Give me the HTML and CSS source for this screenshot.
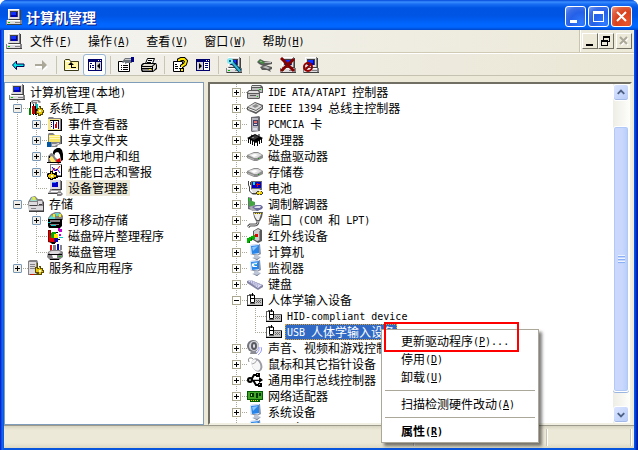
FILE: index.html
```html
<!DOCTYPE html>
<html lang="zh-CN">

<head>
    <meta charset="UTF-8">
    <meta name="viewport" content="width=device-width, initial-scale=1.0">
    <title>计算机管理</title>
    <link rel="stylesheet" href="styles.css">
</head>

<body>
    <svg class="sprite" aria-hidden="true">
        <symbol id="pc" viewBox="0 0 16 16">
            <path fill="#848284" d="M2 0h12v11H2zM0 11h16v5H0z" />
            <path fill="#dedbde" d="M2 0h11v10H2zM1 11h13v4H1z" />
            <path fill="#fff" d="M2 0h11v1H2zM2 1h1v8H2zM1 11h13v1H1z" />
            <path fill="#424142" d="M4 2h8v6H4zM14 1h1v10h-1zM3 10h11v1H3zM1 15h15v1H1z" />
            <path fill="#0000b5" d="M5 3h6v5H5z" />
            <path fill="#1030ff" d="M5 3h5v3H5z" />
            <path fill="#848284" d="M9 13h5v1H9z" />
            <path fill="#00c600" d="M2 13h2v1H2z" />
        </symbol>
        <symbol id="tools" viewBox="0 0 16 16">
            <path fill="#848284" d="M3 1l2-1h6l2 2-1 1-3-1v4H7V3L4 4z" />
            <path fill="#dedbde" d="M5 1h5v1H5z" />
            <path fill="#000" d="M2 2h1v6H2zM7 6h2v9H7zM5 4h1v11H5z" />
            <path fill="#c60000" d="M4 6h3v8H4z" />
            <path fill="#008200" d="M1 8h2v7H1z" />
            <path fill="#00c6c6" d="M8 4h2v5H8z" />
            <path fill="#5a4a00" d="M9 8h2V6h2v2h2v2h1v3h-1v2h-2v1h-3v-2H8v-3h1z" />
            <path fill="#e7c600" d="M10 9h1V7h1v2h2v1h1v2h-1v2h-2v1h-1v-2H9v-2h1z" />
            <path fill="#fff" d="M11 10h2v2h-2z" />
        </symbol>
        <symbol id="events" viewBox="0 0 16 16">
            <path fill="#848284" d="M1 2l1-1h4l1 1h7v13H1z" />
            <path fill="#f7e78c" d="M1 3h12v11H1z" />
            <path fill="#000" d="M14 3h1v12H1v-1h13zM3 4h9v1H3z" />
            <path fill="#fff" d="M4 5h8v8H4z" />
            <path fill="#00009c" d="M4 6h1v1H4zM4 8h1v1H4zM4 10h1v1H4zM6 5h1v8H6zM11 5h1v8h-1z" />
            <path fill="#e70000" d="M8 8h2v4H8zM9 6h1v2H9z" />
        </symbol>
        <symbol id="share" viewBox="0 0 16 16">
            <path fill="#848284" d="M1 2l1-1h4l2 2h6v8H1z" />
            <path fill="#f7e76b" d="M2 3h11v7H2z" />
            <path fill="#fff7bd" d="M2 4h11v1H2zM3 6h10v1H3z" />
            <path fill="#424142" d="M14 4h1v8H6v-1h8z" />
            <path fill="#0055a5" d="M0 10h4v5H0z" />
            <path fill="#848284" d="M4 11h3l2-1h4l1 2-3 1-1 2H4z" />
            <path fill="#dedbde" d="M5 12h4l2-1h1v1l-3 1-1 1H5z" />
        </symbol>
        <symbol id="users" viewBox="0 0 16 16">
            <path fill="#000" d="M7 2l3-2h3l2 2 1 4v6l-2 1-1-6-2-3-2 3H6V4z" />
            <path fill="#fff" d="M8 5l2-1 2 1 1 4-2 3H9L7 9z" />
            <path fill="#848284" d="M1 8l3-3 3 1 1 3 2 2v3l-3 1-6-1z" />
            <path fill="#ffe76b" d="M2 10l3-2 4 6H4z" />
            <path fill="#e70000" d="M9 12l4-2 1 4-3 2z" />
            <path fill="#000" d="M0 14h14v1H0zM2 8h1v2H2z" />
        </symbol>
        <symbol id="perf" viewBox="0 0 16 16">
            <path fill="#848284" d="M3 0h12v12H3z" />
            <path fill="#fff" d="M4 1h10v10H4z" />
            <path fill="#000" d="M14 1h1v12H7v-1h7z" />
            <path fill="none" stroke="#e70000" d="M5 8l2-4 2 3 4-5" />
            <path fill="none" stroke="#0000e7" d="M5 3l3 4 2-2 3 4" />
            <path fill="#000" d="M1 9h2V7h3v2h2V8h2v3l1 1v2H9v1H6v1H3v-1H1v-2H0v-3z" />
            <path fill="#e7c600" d="M2 10h2V8h1v2h2v1h2v2H7v1H5v1H4v-1H2v-1H1v-2h1z" />
            <path fill="#fff" d="M4 11h2v2H4z" />
        </symbol>
        <symbol id="devmgr" viewBox="0 0 16 16">
            <path fill="#848284" d="M3 0h11v10H3z" />
            <path fill="#dedbde" d="M3 0h10v9H3z" />
            <path fill="#0000c6" d="M5 2h6v5H5z" />
            <path fill="#4a8aff" d="M5 2h4v1H5z" />
            <path fill="#424142" d="M14 1h1v9H5V9h9zM1 13h10v1H1z" />
            <path fill="#adaaad" d="M3 10h11v2l-3 1H1z" />
            <path fill="#fff" d="M4 11h7v1H4z" />
            <path fill="#848284" d="M10 12h4l2 2-2 2h-4z" />
            <path fill="#dedbde" d="M11 13h3v1h-3z" />
        </symbol>
        <symbol id="storage" viewBox="0 0 16 16">
            <path fill="#848284" d="M0 6l3-5 4-1 3 3h4l2 3v8l-1 1H1z" />
            <path fill="#9cdece" d="M2 5l2-4h3l2 4z" />
            <path fill="#ffe700" d="M5 1h2v3H5z" />
            <path fill="#dedbde" d="M1 6h8v3H1zM1 10h14v4H1zM10 5h4v4h-4z" />
            <path fill="#424142" d="M15 6h1v10H1v-1h14zM2 9h7v1H2zM11 8h3v1h-3z" />
            <path fill="#848284" d="M3 12h5v1H3z" />
        </symbol>
        <symbol id="removable" viewBox="0 0 16 16">
            <path fill="#848284" d="M1 6l3-4 4-2h5l3 4v4H1z" />
            <path fill="#5ad6ce" d="M2 6l3-3 3 2v2H2zM8 1h4l1 3H9z" />
            <path fill="#ffe700" d="M6 2h2v3H6zM12 2h2v3h-2z" />
            <path fill="#000" d="M1 7h14v7l-2 2H2l-1-2z" />
            <path fill="#848284" d="M3 8h10v2H3zM3 12h9v1H3z" />
            <path fill="#00c6c6" d="M1 10h3v1H1zM4 13h5v1H4z" />
        </symbol>
        <symbol id="defrag" viewBox="0 0 16 16">
            <path fill="#840000" d="M1 2h3v3l5 2v8H5l-4-1z" />
            <path fill="#e70000" d="M2 3h1v4l4 3v4H5l-3-1z" />
            <path fill="#00a500" d="M5 4h4v2H7v4H4V6z" />
            <path fill="#ffe700" d="M7 6h4v4H7z" />
            <path fill="#0000c6" d="M8 10h3v4H8z" />
            <path fill="#c600c6" d="M11 0h2v1h2v3h-3V3h-1zM12 6h2v2h-2z" />
            <path fill="#00c6c6" d="M12 9h4v1h-4z" />
            <path fill="#000" d="M9 4h2v1H9zM11 11h2v1h-2zM3 14h5v2H5z" />
        </symbol>
        <symbol id="disk" viewBox="0 0 16 16">
            <path fill="#e70000" d="M3 1h2v6H3z" />
            <path fill="#0000c6" d="M10 0h2v6h-2z" />
            <path fill="#848284" d="M6 1h3v5H6zM13 1h2v5h-2zM1 8l3-2h9l3 2v5l-4 3H3l-3-3z" />
            <path fill="#dedbde" d="M2 8l3-1h7l2 1-3 2H3z" />
            <path fill="#000" d="M1 10h14v1H1zM3 15h9v1H3z" />
            <path fill="#fff" d="M5 11h5v3H6z" />
            <path fill="#00c600" d="M12 12h2v1h-2z" />
        </symbol>
        <symbol id="services" viewBox="0 0 16 16">
            <path fill="#848284" d="M0 1l2-1h7l1 2v13H0z" />
            <path fill="#dedbde" d="M1 2h7v12H1z" />
            <path fill="#848284" d="M2 4h5v1H2zM2 6h5v1H2zM2 8h5v1H2z" />
            <path fill="#5a4a00" d="M9 3h1v12H2v-1h7zM7 7h2v1h2V6h2v2h2v2h1v3h-2v2h-4v-2H7z" />
            <path fill="#e7c600" d="M8 8h1v1h2V7h1v2h2v2h1v1h-2v2h-2v-2H8z" />
            <path fill="#fff" d="M11 10h2v2h-2z" />
            <path fill="#e70000" d="M3 14h3v1H3z" />
        </symbol>

        <!-- device classes -->
        <symbol id="ide" viewBox="0 0 16 16">
            <path fill="#5a5a5a" d="M5 1h9l2 2v6H4V3zM0 8l2-2h9l2 2v6l-1 1H1l-1-1z" />
            <path fill="#dedede" d="M5 2h8l1 1H5zM2 7h9l1 2H1z" />
            <path fill="#bdbdbd" d="M5 4h10v4h-2l-1-2H5zM1 10h11v4H1z" />
            <path fill="#5a5a5a" d="M3 11h6v1H3z" />
            <path fill="#00c600" d="M12 5h2v1h-2zM10 12h1v1h-1z" />
        </symbol>
        <symbol id="ieee" viewBox="0 0 16 16">
            <path fill="#5a5a5a" d="M0 7l8-5 8 3v4l-7 5-9-4z" />
            <path fill="#dedede" d="M1 7l7-4 7 3-6 4z" />
            <path fill="#8c8c8c" d="M5 6l4-2 3 2-4 2zM2 10l2 1v1l-2-1z" />
            <path fill="#fff" d="M1 8l8 3 6-4v1l-6 4-8-3z" />
        </symbol>
        <symbol id="pcmcia" viewBox="0 0 16 16">
            <path fill="#6b6b73" d="M4 1l8-1 1 1v14l-8 1-1-1z" />
            <path fill="#b5b5bd" d="M5 2h6v13H5z" />
            <path fill="#42426b" d="M6 4h5v6H6z" />
            <path fill="#e76b6b" d="M7 5h3v2H7z" />
            <path fill="#dedeef" d="M7 8h3v1H7zM6 12h4v2H6z" />
        </symbol>
        <symbol id="cpu" viewBox="0 0 16 16">
            <path fill="#000" d="M0 6l8-4 8 4-7 5z" />
            <path fill="#393939" d="M3 6l5-3 4 2-5 3z" />
            <path stroke="#000" fill="none" d="M1.500 6v5M3.500 7v5M5.500 8v5M7.500 9v5M10.500 9v5M12.500 8v4M14.500 6v5M4 3l2 1M12 2v2" />
            <path fill="#8c8c8c" d="M5 5h2v1H5z" />
        </symbol>
        <symbol id="drive" viewBox="0 0 16 16">
            <path fill="#8c8c8c" d="M0 7l7-3h4l5 3v3l-6 3H7L0 10z" />
            <path fill="#dedede" d="M1 7l6-2h4l4 2-5 3H7z" />
            <path fill="#fff" d="M4 7l4-1 3 1-4 2z" />
            <path fill="#b5b5b5" d="M1 9l6 2v1l-6-2z" />
            <path fill="#00a500" d="M11 10h1v1h-1z" />
        </symbol>
        <symbol id="battery" viewBox="0 0 16 16">
            <path fill="#6b6b73" d="M4 1h11v9H4z" />
            <path fill="none" stroke="#424242" d="M1.500 1v4l1 2v4l3 3h4M3.500 2v3" />
            <path fill="#0000c6" d="M5 2h9v6H5z" />
            <path fill="#00e7e7" d="M6 2h2v3H6z" />
            <path fill="#e70000" d="M10 3h1v1h2v1h-2v2h-1V5H9V4h1z" />
            <path fill="#dedede" d="M4 9h9l-2 4H6z" />
            <path fill="#424242" d="M5 13h6v1H5zM10 11h5v1h1v2h-1v1h-5v-1H9v-2h1z" />
            <path fill="#f7d600" d="M10 12h2v-1h2v1h1v2h-2v1h-1v-1h-2z" />
            <path fill="#fff" d="M12 12h1v1h-1z" />
        </symbol>
        <symbol id="modem" viewBox="0 0 16 16">
            <path fill="#6b6b73" d="M1 1l4 1v12l-4-1z" />
            <path fill="#42a542" d="M2 4l6 2v5l-6-1z" />
            <path fill="#adadb5" d="M2 11l6-2 7 3-4 3H5z" />
            <path fill="#6b6b9c" d="M5 11l4-2h5l2 2-1 2-5 2z" />
            <path fill="#dedeef" d="M7 11l3-1h4l-1 2H8z" />
            <path fill="#00e700" d="M2 2h1v3H2z" />
        </symbol>
        <symbol id="port" viewBox="0 0 16 16">
            <path fill="#5a5a5a" d="M6 0h10l-1 5-2 4H9L7 5z" />
            <path fill="#efefef" d="M7 2h7l-1 3-1 3h-2L8 5z" />
            <path fill="#ffe700" d="M7 1h1v1H7zM9 1h1v1H9zM11 1h1v1h-1zM13 1h1v1h-1z" />
            <path fill="none" stroke="#5a5a5a" stroke-width="3" d="M11 9c0 4-2 4-5 4H3L1 15" />
            <path fill="none" stroke="#dedede" d="M11 9c0 4-2 4-5 4H3L1 15" />
        </symbol>
        <symbol id="infrared" viewBox="0 0 16 16">
            <path fill="#5a5a5a" d="M6 3l5-3 4 2v11l-4 2-5-3z" />
            <path fill="#cecece" d="M7 3l4-2 2 1v10l-3 1-3-2z" />
            <path fill="#8c8c8c" d="M12 3h1v9h-1z" />
            <path fill="#e70000" d="M8 6h3v3H8z" />
            <path fill="#00b500" d="M0 10h2V9h2V8h2V7h2v4H6v1H5v1H3v2H0z" />
            <path fill="#005a00" d="M2 13h1v2H2zM4 10h1v2H4z" />
        </symbol>
        <symbol id="monitor" viewBox="0 0 16 16">
            <path fill="#8c94a5" d="M3 1l10-1 1 10-4 2-7-2z" />
            <path fill="#d6e7ff" d="M3 1l9-1v10l-9 0z" />
            <path fill="#2984e7" d="M4 2l8-1v8l-7 1z" />
            <path fill="#8cc6ff" d="M5 3l6-1-5 5z" />
            <path fill="#bdc6d6" d="M7 11l4-1v2l3 1-4 3-5-2 2-1z" />
            <path fill="#6b738c" d="M6 14l4 1 4-2-4 3z" />
        </symbol>
        <symbol id="display" viewBox="0 0 16 16">
            <use href="#monitor" />
            <path fill="#fff" d="M5 4l5-1v1L6 6h4v1H6L5 6z" />
            <path fill="#42c6c6" d="M7 4h2v1H7z" />
        </symbol>
        <symbol id="keyboard" viewBox="0 0 16 16">
            <path fill="#8484a5" d="M0 5l3-1 13 5v2l-5 3L0 7z" />
            <path fill="#dedef7" d="M1 5l2-1 12 5-4 3z" />
            <path stroke="#8c8cb5" fill="none" stroke-dasharray="1 1" d="M3 5.500l9 4M3 6.500l8 4M5 5l9 4" />
        </symbol>
        <symbol id="hid" viewBox="0 0 16 16">
            <path fill="#5a5a5a" d="M0 3h2V2h5v4h9v8H0z" />
            <path fill="#fff" d="M1 4h2v8H1zM4 4h3v6H4z" />
            <path fill="#000" d="M3 3h1v7H3zM7 3h1v7H7zM4 10h3v1H4zM4 6h3v1H4zM5 1h1v3H5zM0 13h16v1H0zM15 7h1v7h-1z" />
            <path fill="#c6c6c6" d="M8 7h7v5H8z" />
            <path fill="#6b6b6b" d="M9 8h1v1H9zM11 8h1v1h-1zM13 8h1v1h-1zM10 9h1v1h-1zM12 9h1v1h-1zM9 10h1v1H9zM11 10h1v1h-1zM13 10h1v1h-1z" />
            <path fill="#bdbdbd" d="M1 12h14v1H1z" />
        </symbol>
        <symbol id="sound" viewBox="0 0 16 16">
            <ellipse cx="6" cy="6" rx="6" ry="6" fill="#73737b" />
            <ellipse cx="7" cy="6" rx="5" ry="5" fill="#d6d6de" />
            <ellipse cx="7" cy="6" rx="3" ry="4" fill="#5a5a63" />
            <ellipse cx="7" cy="6" rx="1" ry="2" fill="#e7e7ef" />
            <path fill="#8c8c94" d="M4 11h5l1 3H3z" />
            <path fill="none" stroke="#9c9cff" d="M12 7q1 3-2 6M14 7q2 4-3 8" />
        </symbol>
        <symbol id="mouse" viewBox="0 0 16 16">
            <path fill="none" stroke="#8c8c8c" d="M2 6Q0 1 5 2l2 2" />
            <ellipse cx="10" cy="9" rx="5" ry="7" fill="#9c9ca5" transform="rotate(-25 10 9)" />
            <ellipse cx="9" cy="9" rx="4" ry="6" fill="#f7f7f7" transform="rotate(-25 9 9)" />
            <path fill="none" stroke="#a5a5a5" d="M5 8q3 0 5-4" />
        </symbol>
        <symbol id="usb" viewBox="0 0 16 16">
            <path fill="none" stroke="#000" stroke-width="2" d="M2 8h12M4 8l3-5h3M6 8l3 5h3" />
            <circle cx="3" cy="8" r="3" fill="#000" />
            <path fill="#000" d="M12 5l4 3-4 3zM9 1h4v4H9zM11 11h4v4h-4z" />
            <circle cx="3" cy="8" r="1" fill="#bdbdbd" />
            <path fill="#bdbdbd" d="M10 2h1v1h-1zM12 12h1v1h-1zM6 7h6v1H6z" />
        </symbol>
        <symbol id="nic" viewBox="0 0 16 16">
            <path fill="#005a00" d="M0 3h16v9h-3v2H3v-2H0z" />
            <path fill="#42a529" d="M1 4h14v7H1z" />
            <path fill="#003900" d="M3 5h4v4H3zM9 5h2v5H9zM12 5h2v3h-2z" />
            <path fill="#a5de63" d="M4 6h1v2H4z" />
            <path fill="#ffe700" d="M4 12h1v1H4zM6 12h1v1H6zM8 12h1v1H8zM10 12h1v1h-1z" />
        </symbol>

        <!-- toolbar -->
        <symbol id="back" viewBox="0 0 16 16">
            <path fill="#00e7e7" stroke="#000050" d="M2.500 8l4-4v3h7.500v2.500h-7.500v3z" />
        </symbol>
        <symbol id="forward" viewBox="0 0 16 16">
            <path fill="#fff" d="M3 8h7V5l5 5-5 4v-3H3z" />
            <path fill="#aca899" d="M2 7h7V3l5 5-5 5V9H2z" />
        </symbol>
        <symbol id="up" viewBox="0 0 16 16">
            <path fill="#fff7a5" stroke="#393918" d="M.5 13.500v-10l1-1h4l1 2h8v9z" />
            <path fill="#fff" d="M2 4h4v1H2zM2 12h12v1H2z" />
            <path fill="#000" d="M4 8l3-3 3 3H8v2h4v1H7V8z" />
        </symbol>
        <symbol id="tree-left" viewBox="0 0 16 16">
            <path fill="#00006b" d="M1 2h14v12H1z" />
            <path fill="#fff" d="M2 5h6v8H2z" />
            <path fill="#00006b" d="M3 6h2v1H3zM5 8h2v1H5zM5 10h2v1H5zM3 8h1v3H3z" />
            <path fill="#d6d3ce" d="M9 5h5v8H9z" />
            <path fill="#000" d="M13 6v6l-3-3z" />
            <path fill="#fff" d="M11 3h1v1h-1zM13 3h1v1h-1z" />
        </symbol>
        <symbol id="tree-right" viewBox="0 0 16 16">
            <path fill="#00006b" d="M1 2h14v12H1z" />
            <path fill="#d6d3ce" d="M2 5h6v8H2z" />
            <path fill="#fff" d="M9 5h5v8H9zM11 3h1v1h-1zM13 3h1v1h-1z" />
            <path fill="#000" d="M4 6v6l3-3z" />
            <path fill="#00006b" d="M10 6h3v1h-3zM10 8h3v1h-3zM10 10h3v1h-3z" />
        </symbol>
        <symbol id="props" viewBox="0 0 16 16">
            <path fill="#fff" stroke="#000" d="M.5 4.500h11v10H.5z" />
            <path fill="#000" d="M3 8h1v1H3zM5 8h5v1H5zM3 10h1v1H3zM5 10h5v1H5zM3 12h1v1H3zM5 12h5v1H5z" />
            <path fill="#6b737b" d="M4 5l3-4h7v5H9L7 7V5L5 6z" />
            <path fill="#c6c6c6" d="M7 2h6v1H7z" />
            <path fill="#000084" d="M13 0h3v5h-3z" />
        </symbol>
        <symbol id="print" viewBox="0 0 16 16">
            <path fill="#fff" stroke="#000" d="M4.500 6.500l2-5h7l-2 5z" />
            <path fill="#000" d="M7 3h4v1H7zM6 5h4v1H6zM2 6h13l1 2v4l-4 3H1l-1-2V8z" />
            <path fill="#dedbce" d="M3 7h10l-2 2H1zM1 10h10v1H1zM12 9l3-2v4l-3 3z" />
            <path fill="#848284" d="M1 12h10v2H2z" />
            <path fill="#ffe700" d="M8 12h2v1H8z" />
        </symbol>
        <symbol id="help" viewBox="0 0 16 16">
            <path fill="#fff" stroke="#000" d="M1.500 4.500h9v10h-9z" />
            <path fill="#000" d="M3 7h2v1H3zM3 9h3v1H3zM3 11h3v1H3zM7 11h2v1H7z" />
            <path fill="none" stroke="#000" stroke-width="4" d="M7 4V3l2-1h3l2 2-1 3-3 2v1" />
            <path fill="none" stroke="#ffe700" stroke-width="2" d="M7 4V3l2-1h3l2 2-1 3-3 2v1" />
            <path fill="#000" d="M8 11h4v4H8z" />
            <path fill="#ffe700" d="M9 12h2v2H9z" />
        </symbol>
        <symbol id="scan" viewBox="0 0 16 16">
            <use href="#pc" />
            <path fill="none" stroke="#003952" stroke-width="4" d="M5 4l9 10" />
            <path fill="none" stroke="#31b5d6" stroke-width="2" d="M5 4l9 10" />
            <circle cx="4" cy="4" r="3" fill="#84e7ef" />
            <path fill="#006b8c" d="M3 3h2v2H3z" />
        </symbol>
        <symbol id="update" viewBox="0 0 16 16">
            <path fill="#5a5a5a" d="M0 5l3-3 4 2 8 1v2L6 9 2 7zM3 10l5-2 7 2v2l-2 1 1 2-4-2H5z" />
            <path fill="#428c42" d="M1 4l3-1 4 3-3 1z" />
            <path fill="#bdbdbd" d="M7 5h7v1H8zM5 10l4-1 4 2-2 1z" />
            <path fill="#84b584" d="M3 4h2v1H3z" />
        </symbol>
        <symbol id="remove" viewBox="0 0 16 16">
            <use href="#pc" />
            <path fill="none" stroke="#840000" stroke-width="3" d="M1 1l13 13M14 2L1 14" />
        </symbol>
        <symbol id="disable" viewBox="0 0 16 16">
            <use href="#pc" />
            <circle cx="5" cy="10" r="4" fill="none" stroke="#940000" stroke-width="2" />
            <path stroke="#940000" stroke-width="2" d="M2 13l6-6" />
        </symbol>
    </svg>

    <div class="window">
        <header class="titlebar">
            <svg class="icon"><use href="#pc" /></svg>
            <h1 class="title">计算机管理</h1>
            <div class="captions">
                <button class="caption" aria-label="最小化"><svg viewBox="0 0 19 19"><path fill="#fff" d="M4 13h7v3H4z" /></svg></button>
                <button class="caption" aria-label="最大化"><svg viewBox="0 0 19 19"><path fill="#fff" d="M4 4h11v11H4zM5 7v7h9V7z" fill-rule="evenodd" /></svg></button>
                <button class="caption close" aria-label="关闭"><svg viewBox="0 0 19 19"><path stroke="#fff" stroke-width="2" d="M5 5l9 9M14 5l-9 9" /></svg></button>
            </div>
        </header>

        <nav class="menubar">
            <svg class="icon"><use href="#pc" /></svg>
            <div class="menus">
                <button class="menu">文件<span class="en">(<u>F</u>)</span></button>
                <button class="menu">操作<span class="en">(<u>A</u>)</span></button>
                <button class="menu">查看<span class="en">(<u>V</u>)</span></button>
                <button class="menu">窗口<span class="en">(<u>W</u>)</span></button>
                <button class="menu">帮助<span class="en">(<u>H</u>)</span></button>
            </div>
            <div class="mdi">
                <button class="mdi-btn" aria-label="最小化子窗口"><svg viewBox="0 0 12 12"><path d="M2 9h7v2H2z" /></svg></button>
                <button class="mdi-btn" aria-label="还原子窗口"><svg viewBox="0 0 12 12"><path fill-rule="evenodd" d="M3 1h7v6H8v4H1V5h2zM4 3v2h4v1h1V3zM2 7v3h5V7z" /></svg></button>
                <button class="mdi-btn mdi-close" aria-label="关闭子窗口" disabled><svg viewBox="0 0 12 12"><path stroke="#fff" stroke-width="2" d="M3 3l7 7M10 3l-7 7" /><path stroke="#aca899" stroke-width="2" d="M2 2l7 7M9 2L2 9" /></svg></button>
            </div>
        </nav>

        <div class="toolbar">
            <button class="tool" aria-label="后退"><svg class="icon"><use href="#back" /></svg></button>
            <button class="tool" aria-label="前进" disabled><svg class="icon"><use href="#forward" /></svg></button>
            <span class="sep"></span>
            <button class="tool" aria-label="向上"><svg class="icon"><use href="#up" /></svg></button>
            <button class="tool active" aria-label="控制台树"><svg class="icon"><use href="#tree-left" /></svg></button>
            <span class="sep"></span>
            <button class="tool" aria-label="属性"><svg class="icon"><use href="#props" /></svg></button>
            <button class="tool" aria-label="打印"><svg class="icon"><use href="#print" /></svg></button>
            <span class="sep"></span>
            <button class="tool" aria-label="帮助"><svg class="icon"><use href="#help" /></svg></button>
            <button class="tool" aria-label="操作窗格"><svg class="icon"><use href="#tree-right" /></svg></button>
            <span class="sep"></span>
            <button class="tool" aria-label="扫描检测硬件改动"><svg class="icon"><use href="#scan" /></svg></button>
            <span class="sep"></span>
            <button class="tool" aria-label="更新驱动程序"><svg class="icon"><use href="#update" /></svg></button>
            <button class="tool" aria-label="卸载"><svg class="icon"><use href="#remove" /></svg></button>
            <button class="tool" aria-label="停用"><svg class="icon"><use href="#disable" /></svg></button>
        </div>

        <main class="panes">
            <section class="pane console">
                <div class="root"><svg class="icon"><use href="#pc" /></svg><span class="label">计算机管理<span class="en">(</span>本地<span class="en">)</span></span></div>
                <ul class="tree">
                    <li>
                        <div class="row"><button class="exp open" aria-label="折叠"></button><svg class="icon"><use href="#tools" /></svg><span class="label">系统工具</span></div>
                        <ul class="tree">
                            <li><div class="row"><button class="exp" aria-label="展开"></button><svg class="icon"><use href="#events" /></svg><span class="label">事件查看器</span></div></li>
                            <li><div class="row"><button class="exp" aria-label="展开"></button><svg class="icon"><use href="#share" /></svg><span class="label">共享文件夹</span></div></li>
                            <li><div class="row"><button class="exp" aria-label="展开"></button><svg class="icon"><use href="#users" /></svg><span class="label">本地用户和组</span></div></li>
                            <li><div class="row"><button class="exp" aria-label="展开"></button><svg class="icon"><use href="#perf" /></svg><span class="label">性能日志和警报</span></div></li>
                            <li><div class="row leaf"><svg class="icon"><use href="#devmgr" /></svg><span class="label current">设备管理器</span></div></li>
                        </ul>
                    </li>
                    <li>
                        <div class="row"><button class="exp open" aria-label="折叠"></button><svg class="icon"><use href="#storage" /></svg><span class="label">存储</span></div>
                        <ul class="tree">
                            <li><div class="row"><button class="exp" aria-label="展开"></button><svg class="icon"><use href="#removable" /></svg><span class="label">可移动存储</span></div></li>
                            <li><div class="row leaf"><svg class="icon"><use href="#defrag" /></svg><span class="label">磁盘碎片整理程序</span></div></li>
                            <li><div class="row leaf"><svg class="icon"><use href="#disk" /></svg><span class="label">磁盘管理</span></div></li>
                        </ul>
                    </li>
                    <li><div class="row"><button class="exp" aria-label="展开"></button><svg class="icon"><use href="#services" /></svg><span class="label">服务和应用程序</span></div></li>
                </ul>
            </section>

            <section class="pane devices">
                <ul class="tree">
                    <li><div class="row"><button class="exp" aria-label="展开"></button><svg class="icon"><use href="#ide" /></svg><span class="label"><span class="en">IDE ATA/ATAPI </span>控制器</span></div></li>
                    <li><div class="row"><button class="exp" aria-label="展开"></button><svg class="icon"><use href="#ieee" /></svg><span class="label"><span class="en">IEEE 1394 </span>总线主控制器</span></div></li>
                    <li><div class="row"><button class="exp" aria-label="展开"></button><svg class="icon"><use href="#pcmcia" /></svg><span class="label"><span class="en">PCMCIA </span>卡</span></div></li>
                    <li><div class="row"><button class="exp" aria-label="展开"></button><svg class="icon"><use href="#cpu" /></svg><span class="label">处理器</span></div></li>
                    <li><div class="row"><button class="exp" aria-label="展开"></button><svg class="icon"><use href="#drive" /></svg><span class="label">磁盘驱动器</span></div></li>
                    <li><div class="row"><button class="exp" aria-label="展开"></button><svg class="icon"><use href="#drive" /></svg><span class="label">存储卷</span></div></li>
                    <li><div class="row"><button class="exp" aria-label="展开"></button><svg class="icon"><use href="#battery" /></svg><span class="label">电池</span></div></li>
                    <li><div class="row"><button class="exp" aria-label="展开"></button><svg class="icon"><use href="#modem" /></svg><span class="label">调制解调器</span></div></li>
                    <li><div class="row"><button class="exp" aria-label="展开"></button><svg class="icon"><use href="#port" /></svg><span class="label">端口<span class="en"> (COM </span>和<span class="en"> LPT)</span></span></div></li>
                    <li><div class="row"><button class="exp" aria-label="展开"></button><svg class="icon"><use href="#infrared" /></svg><span class="label">红外线设备</span></div></li>
                    <li><div class="row"><button class="exp" aria-label="展开"></button><svg class="icon"><use href="#monitor" /></svg><span class="label">计算机</span></div></li>
                    <li><div class="row"><button class="exp" aria-label="展开"></button><svg class="icon"><use href="#display" /></svg><span class="label">监视器</span></div></li>
                    <li><div class="row"><button class="exp" aria-label="展开"></button><svg class="icon"><use href="#keyboard" /></svg><span class="label">键盘</span></div></li>
                    <li>
                        <div class="row"><button class="exp open" aria-label="折叠"></button><svg class="icon"><use href="#hid" /></svg><span class="label">人体学输入设备</span></div>
                        <ul class="tree">
                            <li><div class="row leaf"><svg class="icon"><use href="#hid" /></svg><span class="label"><span class="en">HID-compliant device</span></span></div></li>
                            <li><div class="row leaf"><svg class="icon"><use href="#hid" /></svg><span class="label selected"><span class="en">USB </span>人体学输入设备</span></div></li>
                        </ul>
                    </li>
                    <li><div class="row"><button class="exp" aria-label="展开"></button><svg class="icon"><use href="#sound" /></svg><span class="label">声音、视频和游戏控制器</span></div></li>
                    <li><div class="row"><button class="exp" aria-label="展开"></button><svg class="icon"><use href="#mouse" /></svg><span class="label">鼠标和其它指针设备</span></div></li>
                    <li><div class="row"><button class="exp" aria-label="展开"></button><svg class="icon"><use href="#usb" /></svg><span class="label">通用串行总线控制器</span></div></li>
                    <li><div class="row"><button class="exp" aria-label="展开"></button><svg class="icon"><use href="#nic" /></svg><span class="label">网络适配器</span></div></li>
                    <li><div class="row"><button class="exp" aria-label="展开"></button><svg class="icon"><use href="#monitor" /></svg><span class="label">系统设备</span></div></li>
                    <li><div class="row"><button class="exp" aria-label="展开"></button><svg class="icon"><use href="#monitor" /></svg><span class="label">显示卡</span></div></li>
                </ul>
                <div class="scrollbar">
                    <button class="arrow" aria-label="向上滚动"><svg viewBox="0 0 15 15"><path fill="none" stroke="#4d6185" stroke-width="2" d="M4 9l3.500-3.500L11 9" /></svg></button>
                    <div class="track"><div class="thumb"></div></div>
                    <button class="arrow" aria-label="向下滚动"><svg viewBox="0 0 15 15"><path fill="none" stroke="#4d6185" stroke-width="2" d="M4 6l3.500 3.500L11 6" /></svg></button>
                </div>
            </section>
        </main>

        <footer class="statusbar">
            <span class="status main"></span>
            <span class="status mid"></span>
            <span class="status end"></span>
        </footer>

        <div class="context-menu">
            <button class="item">更新驱动程序<span class="en">(<u>P</u>)...</span></button>
            <button class="item">停用<span class="en">(<u>D</u>)</span></button>
            <button class="item">卸载<span class="en">(<u>U</u>)</span></button>
            <hr>
            <button class="item">扫描检测硬件改动<span class="en">(<u>A</u>)</span></button>
            <hr>
            <button class="item default">属性<span class="en">(<u>R</u>)</span></button>
        </div>
        <div class="marker"></div>
    </div>
</body>

</html>
```

FILE: styles.css
```css
* {
    margin: 0;
    padding: 0;
    box-sizing: border-box;
}

body {
    font-family: "Noto Sans CJK SC", "Liberation Sans", sans-serif;
    font-size: 12px;
    line-height: 16px;
    color: #000;
    background: #fff;
}

button {
    font: inherit;
    color: inherit;
    background: none;
    border: none;
    white-space: pre;
}

ul {
    list-style: none;
}

.sprite {
    display: none;
}

.icon {
    flex: none;
    display: block;
    width: 16px;
    height: 16px;
}

.en {
    font-family: "DejaVu Sans Mono", "Liberation Mono", monospace;
    font-size: 10px;
    line-height: 12px;
    vertical-align: 1px;
}

/* window frame */
.window {
    position: relative;
    display: flex;
    flex-direction: column;
    height: 100vh;
    padding: 0 4px 2px;
    overflow: hidden;
    border-radius: 7px 7px 0 0;
    background: linear-gradient(90deg, #0019cf 0, #0831d9 1px, #166aee 2px, #0855dd 4px, #0855dd calc(100% - 4px), #0050f0 calc(100% - 3px), #0030c8 calc(100% - 2px), #00138c 100%);
}

.titlebar {
    display: flex;
    align-items: center;
    gap: 4px;
    flex: none;
    height: 30px;
    margin: 0 -4px;
    padding: 3px 6px 0;
    background: linear-gradient(#0347d8 0, #3a8fff 2px, #1a6ff5 4px, #0054e3 8px, #0055e5 16px, #0066ff 24px, #0066ff 27px, #0048cc 30px);
}

.title {
    flex: 1;
    font-size: 14px;
    font-weight: bold;
    color: #fff;
    text-shadow: 1px 1px 0 #0a1883;
}

.captions {
    display: flex;
    gap: 2px;
}

.caption {
    width: 21px;
    height: 21px;
    border: 1px solid #fff;
    border-radius: 3px;
    background: radial-gradient(circle at 80% 85%, #2f7bff 0, #2460e8 50%, #3d6fe8 75%, #7ba2f5 100%);
}

.caption svg,
.mdi-btn svg,
.arrow svg {
    display: block;
    width: 100%;
    height: 100%;
}

.close {
    background: radial-gradient(circle at 80% 85%, #e8552c 0, #d8401c 50%, #e06040 75%, #f0a088 100%);
}

/* menu bar */
.menubar {
    display: flex;
    align-items: center;
    flex: none;
    height: 23px;
    padding-left: 2px;
    background: linear-gradient(90deg, #f4f4f2, #ece9d8);
    border-bottom: 1px solid #d0cab4;
}

.menus {
    display: flex;
    flex: 1;
    gap: 16px;
    padding-left: 8px;
}

.mdi {
    display: flex;
    align-items: center;
    height: 100%;
    padding: 0 2px;
    border-left: 1px solid #c8c4b0;
    box-shadow: inset 1px 0 #fff;
}

.mdi-btn {
    width: 16px;
    height: 16px;
    padding: 1px;
    background: #ece9d8;
    border: 1px solid;
    border-color: #fff #716f64 #716f64 #fff;
}

.mdi-close {
    margin-left: 2px;
}

/* tool bar */
.toolbar {
    display: flex;
    align-items: center;
    flex: none;
    height: 23px;
    padding-left: 2px;
    background: linear-gradient(90deg, #f2f1ed, #ebe7d6);
    border-top: 1px solid #fff;
    border-bottom: 1px solid #c5c2b2;
}

.tool {
    display: flex;
    align-items: center;
    justify-content: center;
    width: 23px;
    height: 22px;
}

.active {
    background: #fdfdfc;
    border: 1px solid #98b5d2;
    border-radius: 3px;
}

.sep {
    width: 8px;
    height: 18px;
    background: linear-gradient(#c9c5b3, #c9c5b3) 4px 0 / 1px 100% no-repeat;
}

/* panes */
.panes {
    display: flex;
    gap: 4px;
    flex: 1;
    min-height: 0;
    padding: 6px 2px 0 0;
    background: #ece9d8;
}

.pane {
    overflow: hidden;
    background: #fff;
}

.console {
    flex: none;
    width: 200px;
    padding-top: 1px;
    border: 1px solid #7f9db9;
}

.console > .tree {
    padding-left: 3px;
}

.root {
    display: flex;
    gap: 3px;
    padding-left: 4px;
}

.devices {
    display: flex;
    flex: 1;
    min-width: 0;
    border: 2px solid;
    border-color: #716f64 #f1efe2 #f1efe2 #716f64;
}

.devices > .tree {
    flex: 1;
    padding-left: 17px;
}

/* tree rows with dotted guide lines */
.tree .tree {
    padding-left: 19px;
}

.tree li {
    background: repeating-linear-gradient(#aca899 0 1px, transparent 1px 2px) 9px 0 / 1px 100% no-repeat;
}

.console li:last-child,
.tree .tree li:last-child {
    background-size: 1px 8px;
}

.row {
    display: flex;
    align-items: center;
    height: 16px;
    background: repeating-linear-gradient(90deg, #aca899 0 1px, transparent 1px 2px) 9px 8px / 11px 1px no-repeat;
}

.row .icon {
    margin-left: 1px;
    margin-right: 3px;
}

.leaf {
    padding-left: 19px;
}

.exp {
    flex: none;
    width: 9px;
    height: 9px;
    margin: 0 5px;
    border: 1px solid #aca890;
    background:
        linear-gradient(#000, #000) center / 5px 1px no-repeat,
        linear-gradient(#000, #000) center / 1px 5px no-repeat,
        #fff;
}

.open {
    background: linear-gradient(#000, #000) center / 5px 1px no-repeat, #fff;
}

.console .exp {
    border-color: #7898b5;
    border-radius: 1px;
    background-color: #f0eee6;
}

.label {
    height: 16px;
    padding: 0 2px;
    line-height: 16px;
    white-space: pre;
}

.current {
    background: #ece9d8;
}

.selected {
    color: #fff;
    background: #316ac5;
    outline: 1px dotted #e0a030;
    outline-offset: -1px;
}

/* scroll bar */
.scrollbar {
    display: flex;
    flex-direction: column;
    flex: none;
    width: 17px;
    background: linear-gradient(90deg, #eeede5, #fefefb);
}

.arrow {
    flex: none;
    width: 16px;
    height: 17px;
    border: 1px solid #fff;
    border-radius: 3px;
    background: linear-gradient(135deg, #dbe5ff, #b8ccf8);
    box-shadow: inset 0 -1px #a3b9e6;
}

.track {
    display: flex;
    flex: 1;
    padding: 25px 0 14px;
}

.thumb {
    width: 16px;
    border: 1px solid #fff;
    border-radius: 3px;
    background:
        repeating-linear-gradient(#eef4fe 0 1px, #8cb0f8 1px 2px, #c4d5fc 2px 3px) center / 7px 9px no-repeat,
        linear-gradient(90deg, #c9d8fc 0 60%, #b4cdfb);
    box-shadow: inset 0 0 0 1px #b2c8f5, 0 1px #9ab5e0;
}

/* status bar */
.statusbar {
    display: flex;
    flex: none;
    height: 23px;
    padding: 3px 3px 2px 0;
    border-top: 1px solid #9c9a8c;
    background: linear-gradient(#d8d4c2, #ece9d8 4px, #ece9d8 17px, #dcd8c4);
}

.status {
    border-right: 1px solid #c8c4b0;
    box-shadow: 1px 0 #fff;
}

.main {
    flex: 1;
}

.mid {
    width: 133px;
}

.end {
    width: 84px;
}

/* popup over the device list */
.context-menu {
    position: absolute;
    left: 381px;
    top: 329px;
    width: 158px;
    padding: 2px;
    background: #fff;
    border: 1px solid #aca899;
    box-shadow: 3px 3px 3px rgba(0, 0, 0, 0.5);
}

.item {
    display: block;
    width: 100%;
    height: 18px;
    padding-left: 17px;
    line-height: 18px;
    text-align: left;
}

.default {
    font-weight: bold;
}

.context-menu hr {
    height: 1px;
    margin: 4px 1px;
    border: none;
    background: #aca899;
}

.marker {
    position: absolute;
    left: 384px;
    top: 322px;
    width: 135px;
    height: 30px;
    border: 2px solid #f00;
    pointer-events: none;
}
```
